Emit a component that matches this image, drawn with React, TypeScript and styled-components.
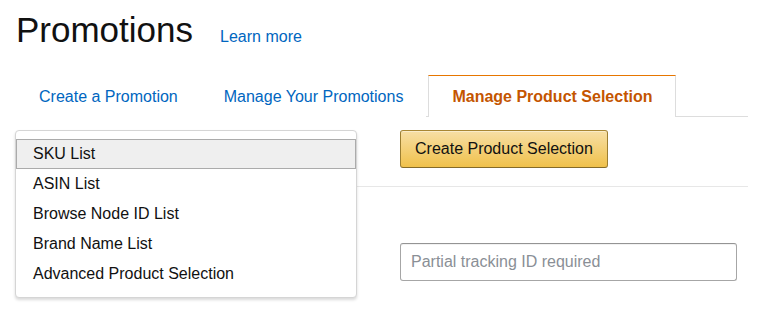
import React, { FC } from 'react'
import styled, { createGlobalStyle } from 'styled-components';

const GlobalStyle = createGlobalStyle`
  body {
    margin: 0;
    min-height: 320px;
    background: #fff;
    font-family: "Liberation Sans", Arial, sans-serif;
    color: #111;
  }
`

const Page = styled.div`
  width: 732px;
  min-height: 320px;
  box-sizing: content-box;
  padding: 10px 16px 0 16px;
`
const Header = styled.div`
  display: flex;
  align-items: baseline;
  gap: 27px;
`
const Title = styled.h1`
  margin: 0;
  font-size: 35px;
  font-weight: normal;
  line-height: 40px;
  color: #111;
`
const Link = styled.a`
  font-size: 16px;
  color: #0066c0;
  text-decoration: none;
`
const TabStrip = styled.div`
  display: flex;
  margin-top: 25px;
  border-bottom: 1px solid #ddd;
`
const Tab = styled.div<{ $active?: boolean }>`
  height: 42px;
  margin-bottom: -1px;
  margin-left: ${p => (p.$active ? '2px' : '0')};
  box-sizing: border-box;
  padding: ${p => (p.$active ? '1px 23px 0' : '1px 22px 0')};
  display: flex;
  align-items: center;
  font-size: 16px;
  background: #fff;
  border: 1px solid ${p => (p.$active ? '#ddd' : 'transparent')};
  border-top-color: ${p => (p.$active ? '#e77600' : 'transparent')};
  border-bottom: none;
  color: ${p => (p.$active ? '#c45500' : '#0066c0')};
  font-weight: ${p => (p.$active ? 'bold' : 'normal')};
`
const Content = styled.div`
  display: grid;
  grid-template-columns: 340px 1fr;
  column-gap: 44px;
  margin-top: 13px;
`
const SelectArea = styled.div`
  position: relative;
  height: 38px;
`
const Menu = styled.ul`
  position: absolute;
  top: 0;
  left: -1px;
  z-index: 2;
  width: 340px;
  margin: 0;
  padding: 8px 0;
  list-style: none;
  background: #fff;
  border: 1px solid #d5d5d5;
  border-radius: 4px;
  box-shadow: 0 2px 3px rgba(0, 0, 0, 0.15);
`
const MenuItem = styled.li<{ $selected?: boolean }>`
  height: 30px;
  box-sizing: border-box;
  display: flex;
  align-items: center;
  padding-left: 16px;
  font-size: 16px;
  color: #111;
  border: 1px solid ${p => (p.$selected ? '#ababab' : 'transparent')};
  background: ${p => (p.$selected ? '#efefef' : 'transparent')};
`
const PrimaryButton = styled.button`
  justify-self: start;
  height: 38px;
  padding: 0 14px;
  font-family: inherit;
  font-size: 16px;
  color: #111;
  border: 1px solid;
  border-color: #a88734 #9c7e31 #846a29;
  border-radius: 3px;
  background: linear-gradient(to bottom, #f7dfa5, #f0c14b);
  box-shadow: inset 0 1px 0 rgba(255, 255, 255, 0.4);
`
const Divider = styled.hr`
  grid-column: 1 / -1;
  margin: 18px 0 0 0;
  border: none;
  border-top: 1px solid #e7e7e7;
`
const SearchInput = styled.input`
  grid-column: 2;
  margin-top: 56px;
  width: 337px;
  height: 38px;
  box-sizing: border-box;
  padding: 0 10px;
  font-family: inherit;
  font-size: 16px;
  border: 1px solid #a6a6a6;
  border-top-color: #949494;
  border-radius: 3px;
  box-shadow: inset 0 1px 0 rgba(0, 0, 0, 0.05);
  &::placeholder {
    color: #8a8f96;
  }
`

const tabs = ['Create a Promotion', 'Manage Your Promotions', 'Manage Product Selection'];
const options = ['SKU List', 'ASIN List', 'Browse Node ID List', 'Brand Name List', 'Advanced Product Selection'];

const App: FC = () => {
  return (
    <>
      <GlobalStyle />
      <Page>
        <Header>
          <Title>Promotions</Title>
          <Link href="#">Learn more</Link>
        </Header>

        <TabStrip>
          {tabs.map((t, i) => (
            <Tab key={t} $active={i === 2}>{t}</Tab>
          ))}
        </TabStrip>

        <Content>
          <SelectArea>
            <Menu>
              {options.map((o, i) => (
                <MenuItem key={o} $selected={i === 0}>{o}</MenuItem>
              ))}
            </Menu>
          </SelectArea>
          <PrimaryButton>Create Product Selection</PrimaryButton>
          <Divider />
          <SearchInput placeholder="Partial tracking ID required" />
        </Content>
      </Page>
    </>
  )
}

export default App
